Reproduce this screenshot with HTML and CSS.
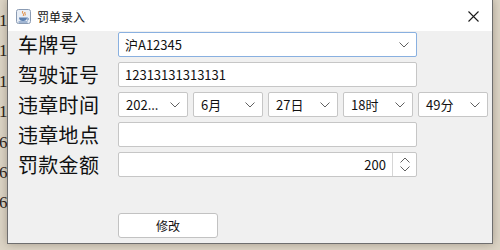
FILE: index.html
```html
<!DOCTYPE html>
<html lang="zh">
<head>
    <meta charset="UTF-8">
    <title>罚单录入</title>
    <link rel="stylesheet" href="styles.css">
</head>
<body>
    <div class="desktop">
        <div class="behind">
            <div>1</div><div>1</div><div>1</div><div>1</div><div>6</div><div>6</div><div>6</div>
        </div>

        <div class="window">
            <div class="titlebar">
                <svg class="app-icon" width="15" height="15" viewBox="0 0 15 15">
                    <rect x="0.5" y="0.5" width="14" height="14" rx="2" fill="#e8eef6" stroke="#8a9bb3"/>
                    <path d="M7 2 C5 4 9 5 7 7 M9 3 C8 4.5 10 5 9 6.5" fill="none" stroke="#e07a1f" stroke-width="1"/>
                    <path d="M3 8.5 H11 C11 11 9.5 12 7 12 C4.5 12 3 11 3 8.5 Z" fill="#5b7fb0"/>
                    <path d="M11 9 C13 9 13 11 11 11" fill="none" stroke="#5b7fb0"/>
                    <path d="M2.5 13 H11.5" stroke="#5b7fb0"/>
                </svg>
                <span class="title">罚单录入</span>
                <svg class="close" width="11" height="11" viewBox="0 0 11 11">
                    <path d="M0.5 0.5 L10.5 10.5 M10.5 0.5 L0.5 10.5" stroke="#1a1a1a" stroke-width="1.1"/>
                </svg>
            </div>

            <div class="content">
                <div class="form">
                    <label class="label">车牌号</label>
                    <div class="field combo focus">
                        <span>沪A12345</span>
                        <svg class="arrow" width="10" height="6" viewBox="0 0 10 6"><polyline points="0.5,0.5 5,5 9.5,0.5"/></svg>
                    </div>

                    <label class="label">驾驶证号</label>
                    <div class="field"><span>12313131313131</span></div>

                    <label class="label">违章时间</label>
                    <div class="time-row">
                        <div class="field combo small"><span>202...</span><svg class="arrow" width="10" height="6" viewBox="0 0 10 6"><polyline points="0.5,0.5 5,5 9.5,0.5"/></svg></div>
                        <div class="field combo small"><span>6月</span><svg class="arrow" width="10" height="6" viewBox="0 0 10 6"><polyline points="0.5,0.5 5,5 9.5,0.5"/></svg></div>
                        <div class="field combo small"><span>27日</span><svg class="arrow" width="10" height="6" viewBox="0 0 10 6"><polyline points="0.5,0.5 5,5 9.5,0.5"/></svg></div>
                        <div class="field combo small"><span>18时</span><svg class="arrow" width="10" height="6" viewBox="0 0 10 6"><polyline points="0.5,0.5 5,5 9.5,0.5"/></svg></div>
                        <div class="field combo small"><span>49分</span><svg class="arrow" width="10" height="6" viewBox="0 0 10 6"><polyline points="0.5,0.5 5,5 9.5,0.5"/></svg></div>
                    </div>

                    <label class="label">违章地点</label>
                    <div class="field"></div>

                    <label class="label">罚款金额</label>
                    <div class="field spinner">
                        <span class="value">200</span>
                        <div class="spin-buttons">
                            <svg width="10" height="6" viewBox="0 0 10 6"><polyline points="0.5,5.5 5,1 9.5,5.5"/></svg>
                            <svg width="10" height="6" viewBox="0 0 10 6"><polyline points="0.5,0.5 5,5 9.5,0.5"/></svg>
                        </div>
                    </div>
                </div>

                <div class="actions">
                    <button class="button">修改</button>
                </div>
            </div>
        </div>
    </div>
</body>
</html>
```

FILE: styles.css
```css
html, body {
    margin: 0;
    padding: 0;
}

body {
    width: 500px;
    height: 250px;
    overflow: hidden;
    background-color: #ddd5c6;
    font-family: "Noto Sans CJK SC", "Noto Sans", sans-serif;
}

.desktop {
    position: relative;
    width: 500px;
    height: 250px;
}

.behind {
    position: absolute;
    left: -1px;
    top: 6px;
    font-family: "Liberation Serif", serif;
    font-size: 17px;
    line-height: 30.4px;
    color: #2a2118;
}

.window {
    position: absolute;
    left: 7px;
    top: -1px;
    width: 484px;
    height: 243px;
    background-color: #f0f0f0;
    border: 1px solid #6e6e6e;
    border-top-color: #9a9a9a;
    box-shadow: 0 0 9px rgba(60, 50, 35, 0.35);
    display: flex;
    flex-direction: column;
}

.titlebar {
    height: 31px;
    background-color: #fff;
    display: flex;
    align-items: center;
    padding-left: 8px;
    padding-right: 10px;
    flex-shrink: 0;
}

.app-icon {
    margin-top: 1px;
}

.title {
    margin-left: 6px;
    font-size: 12px;
    color: #111;
    margin-top: 1px;
}

.close {
    margin-left: auto;
    margin-right: 3px;
    margin-top: 1px;
}

.content {
    padding: 1px 0 0 10px;
}

.form {
    display: grid;
    grid-template-columns: 100px 299px;
    grid-auto-rows: 25px;
    row-gap: 5px;
    align-items: center;
}

.label {
    font-size: 20px;
    line-height: 25px;
    color: #111;
    letter-spacing: 0.3px;
}

.field {
    box-sizing: border-box;
    height: 25px;
    width: 299px;
    background-color: #fff;
    border: 1px solid #c6c6c6;
    border-radius: 2px;
    display: flex;
    align-items: center;
    padding: 0 0 0 6px;
    font-size: 13px;
    color: #111;
}

.combo .arrow {
    margin-left: auto;
    margin-right: 7px;
}

.arrow polyline,
.spin-buttons polyline {
    fill: none;
    stroke: #606060;
    stroke-width: 1;
}

.combo.focus {
    border-color: #89b0e0;
}

.time-row {
    display: flex;
    gap: 5px;
    width: 370px;
}

.field.small {
    width: 70px;
    padding-left: 7px;
}

.spinner {
    padding: 0;
}

.spinner .value {
    margin-left: auto;
    padding-right: 6px;
}

.spin-buttons {
    width: 23px;
    height: 100%;
    border-left: 1px solid #d6d6d6;
    display: flex;
    flex-direction: column;
    align-items: center;
    justify-content: center;
    gap: 3px;
}

.actions {
    margin-top: 35px;
    padding-left: 100px;
}

.button {
    width: 100px;
    height: 25px;
    background-color: #fff;
    border: 1px solid #c2c2c2;
    border-radius: 3px;
    font-family: "Noto Sans CJK SC", sans-serif;
    font-size: 12px;
    color: #111;
    padding: 0;
}
```
